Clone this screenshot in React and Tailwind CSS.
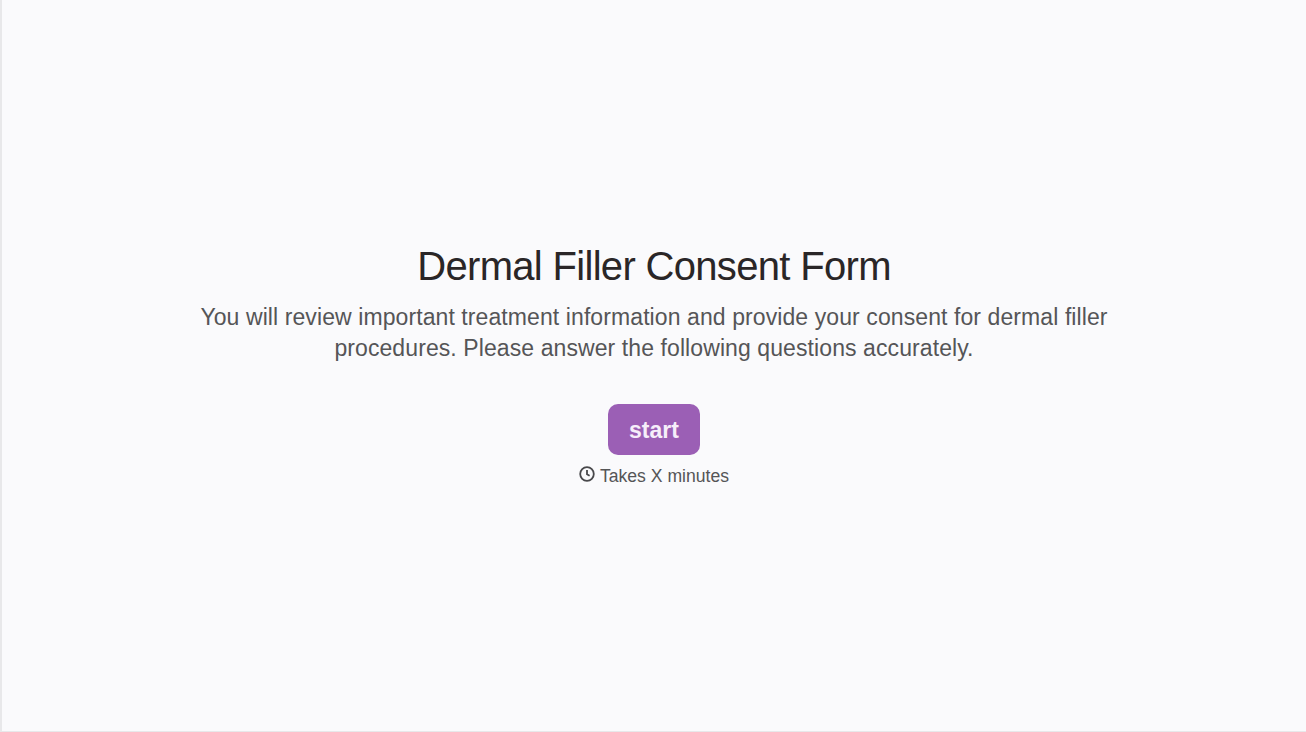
export default function App() {
  return (
    <div className="h-[732px] w-[1306px] bg-[#fafafc] border-l-2 border-b border-[#e8e8ea] flex flex-col items-center justify-center font-['Liberation_Sans',sans-serif]">
      <div className="flex flex-col items-center w-[920px]">
        <h1 className="text-[40px] leading-[48px] text-[#2a2627] tracking-[-0.68px] text-center -mt-[2px]">Dermal Filler Consent Form</h1>
        <p className="mt-[12px] text-[23px] leading-[31px] text-[#555557] tracking-[0.09px] text-center">You will review important treatment information and provide your consent for dermal filler procedures. Please answer the following questions accurately.</p>
        <button className="mt-[40px] w-[92px] h-[51px] rounded-[10px] bg-[#9b5fb5] text-[#f6eefa] text-[23px] font-bold pt-[2px]">start</button>
        <div className="mt-[9px] flex items-center gap-[5px] text-[17.6px] leading-[24px] text-[#555557]">
          <svg className="-mt-[3px]" width="16" height="16" viewBox="0 0 16 16" fill="none" stroke="#48484b" strokeWidth="1.8"><circle cx="8" cy="8" r="6.8" /><path d="M8 4v4.3l2.6 1.4" /></svg>
          <span>Takes X minutes</span>
        </div>
      </div>
    </div>
  );
}
